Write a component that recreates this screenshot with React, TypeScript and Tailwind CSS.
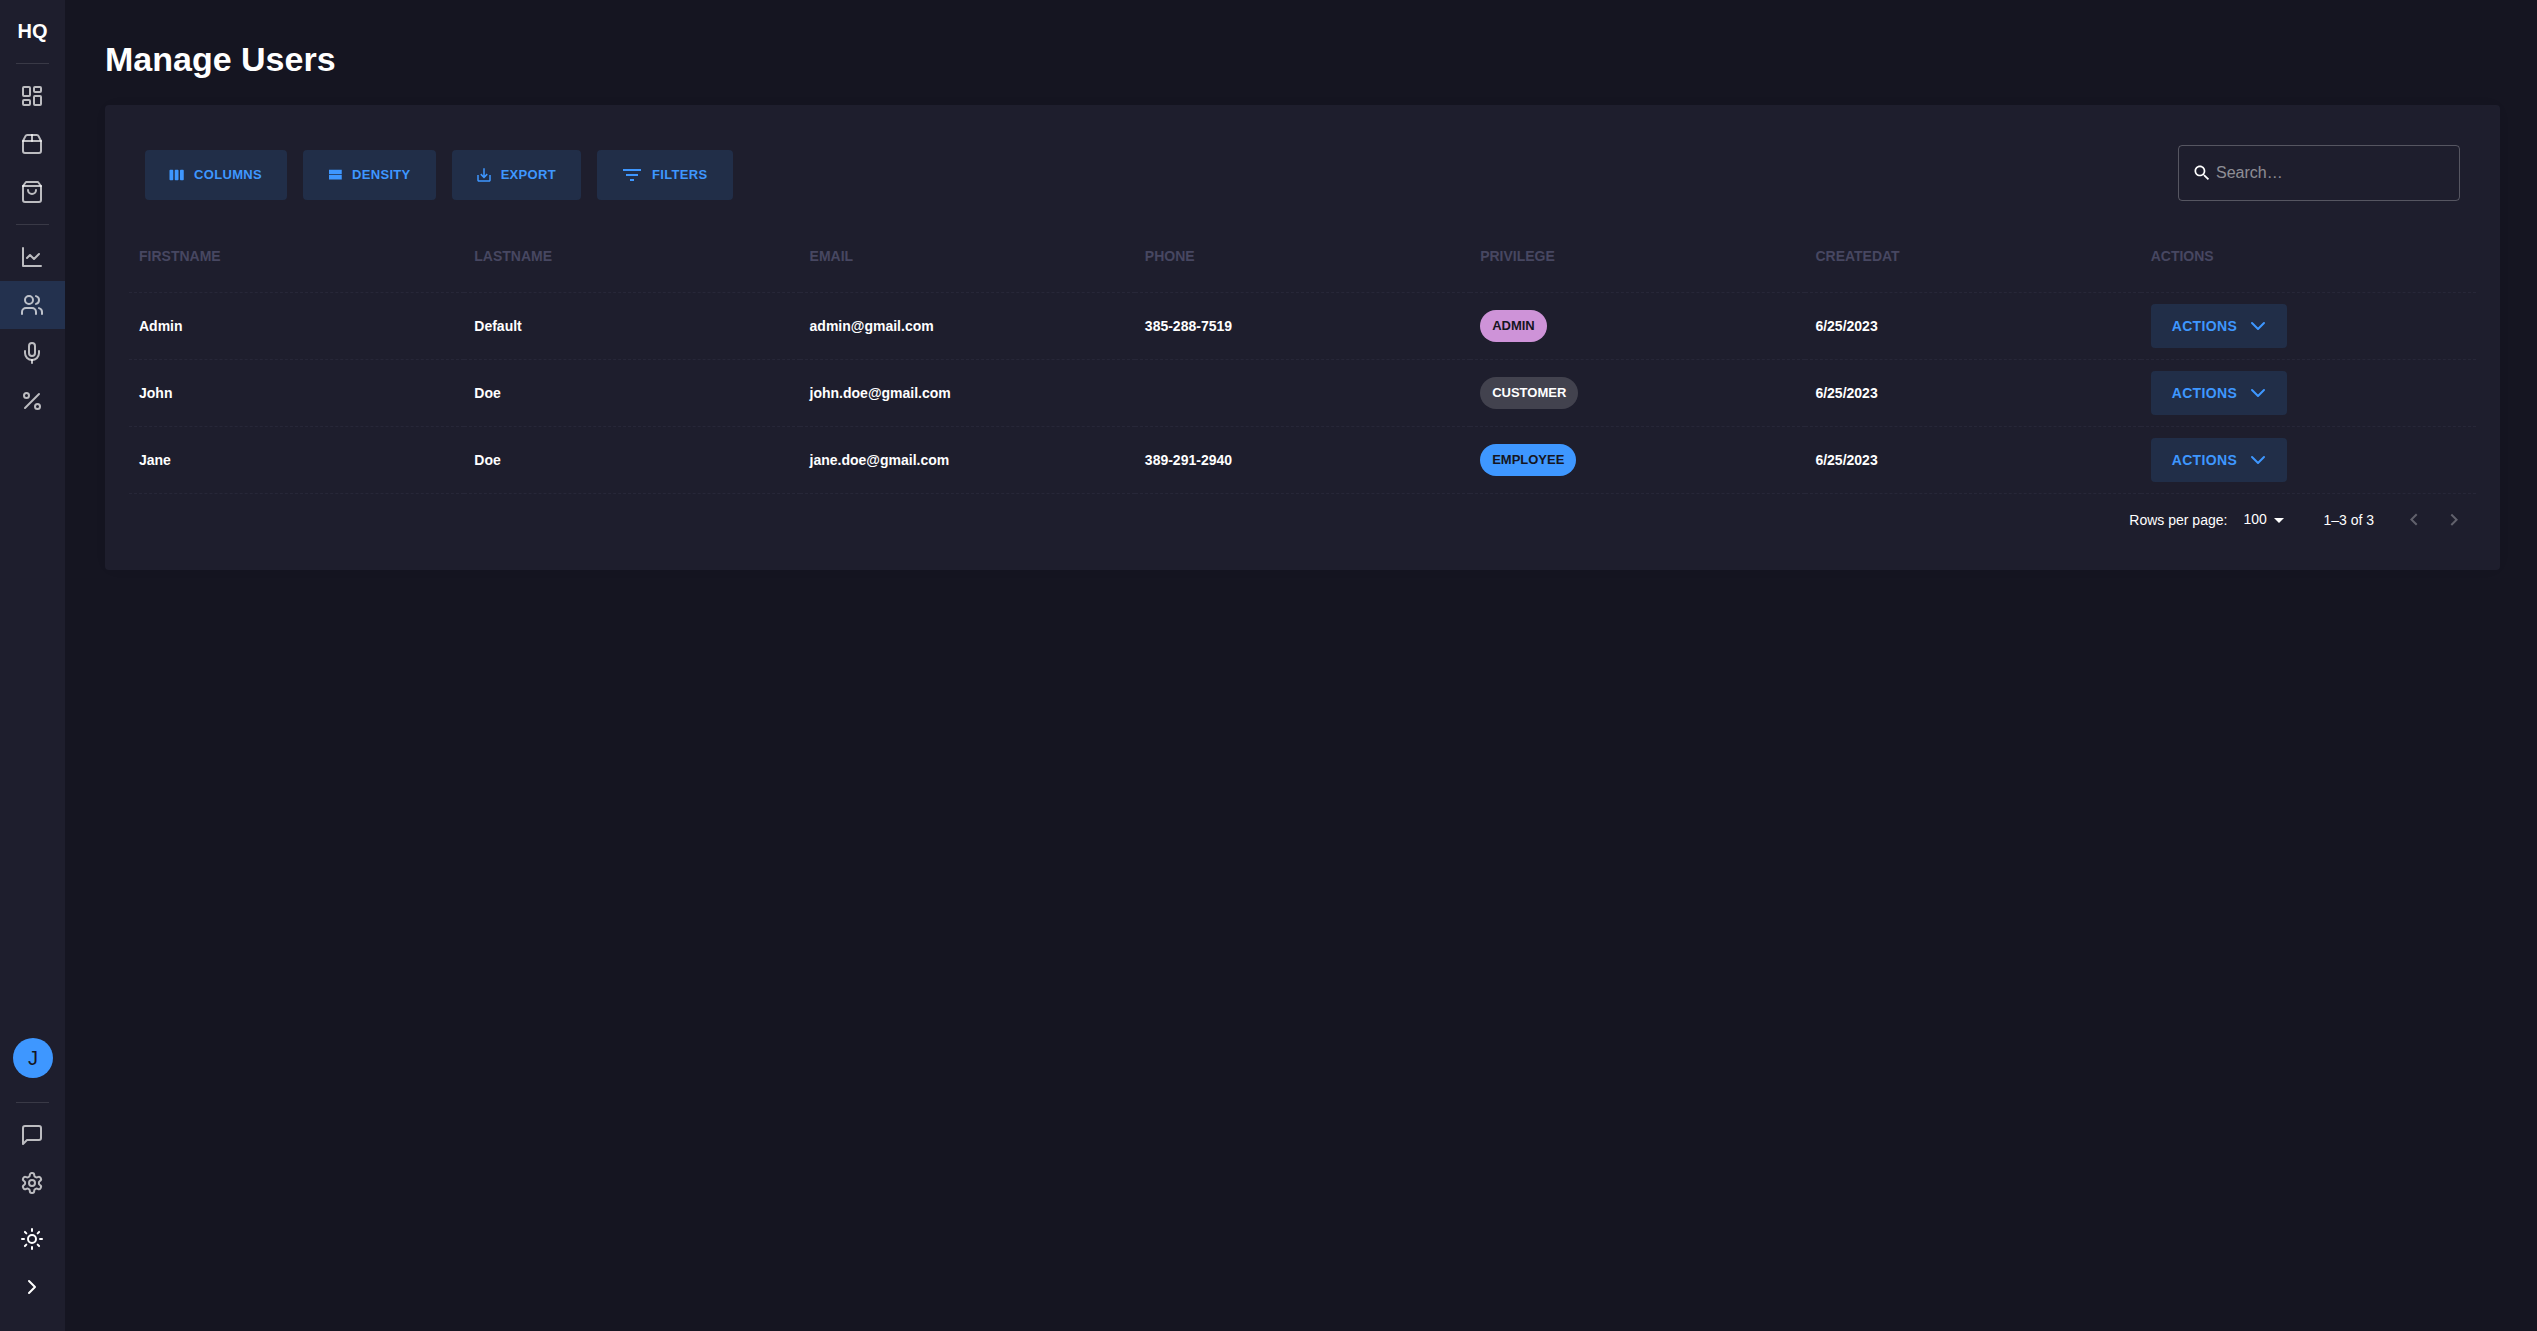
import type { ReactNode } from 'react';

type IconProps = { children: ReactNode };

function LineIcon({ children }: IconProps) {
  return (
    <svg
      className="size-6 shrink-0"
      viewBox="0 0 24 24"
      fill="none"
      stroke="currentColor"
      strokeWidth="2"
      strokeLinecap="round"
      strokeLinejoin="round"
      aria-hidden="true"
    >
      {children}
    </svg>
  );
}

function SolidIcon({ d, className }: { d: string; className: string }) {
  return (
    <svg className={className} viewBox="0 0 24 24" fill="currentColor" aria-hidden="true">
      <path d={d} />
    </svg>
  );
}

function NavItem({
  label,
  active = false,
  children,
}: {
  label: string;
  active?: boolean;
  children: ReactNode;
}) {
  return (
    <a
      href="#"
      aria-label={label}
      aria-current={active ? 'page' : undefined}
      className={
        active
          ? 'flex h-12 items-center bg-[#23314e] pl-5 text-white/70'
          : 'flex h-12 items-center pl-5 text-white/70'
      }
    >
      <LineIcon>{children}</LineIcon>
    </a>
  );
}

function Divider() {
  return <hr className="mx-4 my-2 border-t border-white/12" />;
}

function Sidebar() {
  return (
    <aside className="flex w-[65px] shrink-0 flex-col bg-[#1e1e2d]">
      <div className="flex h-[55px] items-end justify-center pb-2 text-xl leading-8 font-bold text-white">
        HQ
      </div>
      <Divider />
      <nav aria-label="Main">
        <NavItem label="Dashboard">
          <rect width="7" height="9" x="3" y="3" rx="1" />
          <rect width="7" height="5" x="14" y="3" rx="1" />
          <rect width="7" height="9" x="14" y="12" rx="1" />
          <rect width="7" height="5" x="3" y="16" rx="1" />
        </NavItem>
        <NavItem label="Products">
          <path d="M3 9h18v10a2 2 0 0 1-2 2H5a2 2 0 0 1-2-2V9Z" />
          <path d="m3 9 2.45-4.9A2 2 0 0 1 7.24 3h9.52a2 2 0 0 1 1.8 1.1L21 9" />
          <path d="M12 3v6" />
        </NavItem>
        <NavItem label="Orders">
          <path d="M6 2 3 6v14a2 2 0 0 0 2 2h14a2 2 0 0 0 2-2V6l-3-4Z" />
          <path d="M3 6h18" />
          <path d="M16 10a4 4 0 0 1-8 0" />
        </NavItem>
        <Divider />
        <NavItem label="Analytics">
          <path d="M3 3v18h18" />
          <path d="m19 9-5 5-4-4-3 3" />
        </NavItem>
        <NavItem label="Users" active>
          <path d="M16 21v-2a4 4 0 0 0-4-4H6a4 4 0 0 0-4 4v2" />
          <circle cx="9" cy="7" r="4" />
          <path d="M22 21v-2a4 4 0 0 0-3-3.87" />
          <path d="M16 3.13a4 4 0 0 1 0 7.75" />
        </NavItem>
        <NavItem label="Announcements">
          <path d="M12 2a3 3 0 0 0-3 3v7a3 3 0 0 0 6 0V5a3 3 0 0 0-3-3Z" />
          <path d="M19 10v2a7 7 0 0 1-14 0v-2" />
          <path d="M12 19v3" />
        </NavItem>
        <NavItem label="Discounts">
          <path d="M19 5 5 19" />
          <circle cx="6.5" cy="6.5" r="2.5" />
          <circle cx="17.5" cy="17.5" r="2.5" />
        </NavItem>
      </nav>

      <div className="mt-auto pb-5">
        <button
          type="button"
          aria-label="Account"
          className="mb-6 ml-[13px] flex size-10 items-center justify-center rounded-full bg-[#3e97ff] text-xl text-[#151521]"
        >
          J
        </button>
        <Divider />
        <NavItem label="Messages">
          <path d="M21 15a2 2 0 0 1-2 2H7l-4 4V5a2 2 0 0 1 2-2h14a2 2 0 0 1 2 2z" />
        </NavItem>
        <NavItem label="Settings">
          <path d="M12.22 2h-.44a2 2 0 0 0-2 2v.18a2 2 0 0 1-1 1.73l-.43.25a2 2 0 0 1-2 0l-.15-.08a2 2 0 0 0-2.73.73l-.22.38a2 2 0 0 0 .73 2.73l.15.1a2 2 0 0 1 1 1.72v.51a2 2 0 0 1-1 1.74l-.15.09a2 2 0 0 0-.73 2.73l.22.38a2 2 0 0 0 2.73.73l.15-.08a2 2 0 0 1 2 0l.43.25a2 2 0 0 1 1 1.73V20a2 2 0 0 0 2 2h.44a2 2 0 0 0 2-2v-.18a2 2 0 0 1 1-1.73l.43-.25a2 2 0 0 1 2 0l.15.08a2 2 0 0 0 2.73-.73l.22-.39a2 2 0 0 0-.73-2.73l-.15-.08a2 2 0 0 1-1-1.74v-.5a2 2 0 0 1 1-1.74l.15-.09a2 2 0 0 0 .73-2.73l-.22-.38a2 2 0 0 0-2.73-.73l-.15.08a2 2 0 0 1-2 0l-.43-.25a2 2 0 0 1-1-1.73V4a2 2 0 0 0-2-2z" />
          <circle cx="12" cy="12" r="3" />
        </NavItem>
        <button
          type="button"
          aria-label="Toggle theme"
          className="mt-2 flex h-12 w-full items-center pl-5 text-white"
        >
          <LineIcon>
            <circle cx="12" cy="12" r="4" />
            <path d="M12 2v2" />
            <path d="M12 20v2" />
            <path d="m4.93 4.93 1.41 1.41" />
            <path d="m17.66 17.66 1.41 1.41" />
            <path d="M2 12h2" />
            <path d="M20 12h2" />
            <path d="m6.34 17.66-1.41 1.41" />
            <path d="m19.07 4.93-1.41 1.41" />
          </LineIcon>
        </button>
        <button
          type="button"
          aria-label="Expand sidebar"
          className="flex h-12 w-full items-center pl-5 text-white"
        >
          <LineIcon>
            <path d="m9 18 6-6-6-6" />
          </LineIcon>
        </button>
      </div>
    </aside>
  );
}

const toolbarActions = [
  {
    label: 'Columns',
    iconClass: 'size-[18px]',
    d: 'M6 5H3c-.55 0-1 .45-1 1v12c0 .55.45 1 1 1h3c.55 0 1-.45 1-1V6c0-.55-.45-1-1-1zm14 0h-3c-.55 0-1 .45-1 1v12c0 .55.45 1 1 1h3c.55 0 1-.45 1-1V6c0-.55-.45-1-1-1zm-7 0h-3c-.55 0-1 .45-1 1v12c0 .55.45 1 1 1h3c.55 0 1-.45 1-1V6c0-.55-.45-1-1-1z',
  },
  {
    label: 'Density',
    iconClass: 'size-[18px]',
    d: 'M4 18h17v-6H4v6zM4 5v6h17V5H4z',
  },
  {
    label: 'Export',
    iconClass: 'size-[18px]',
    d: 'M19 12v7H5v-7H3v7c0 1.1.9 2 2 2h14c1.1 0 2-.9 2-2v-7h-2zm-6 .67l2.59-2.58L17 11.5l-5 5-5-5 1.41-1.41L11 12.67V3h2z',
  },
  {
    label: 'Filters',
    iconClass: 'size-6',
    d: 'M10 18h4v-2h-4v2zM3 6v2h18V6H3zm3 7h12v-2H6v2z',
  },
];

function Toolbar() {
  return (
    <div className="flex items-center justify-between p-4">
      <div className="flex gap-4 pt-1">
        {toolbarActions.map((action) => (
          <button
            key={action.label}
            type="button"
            className="flex h-[50px] items-center gap-2 rounded bg-[#212e48] pr-[25px] pl-[23px] text-[13px] font-bold tracking-wide text-[#3e97ff] uppercase"
          >
            <SolidIcon d={action.d} className={action.iconClass} />
            {action.label}
          </button>
        ))}
      </div>
      <label className="flex h-14 w-[282px] items-center gap-1 rounded border border-white/25 px-[13px] text-white">
        <SolidIcon
          className="size-5 shrink-0"
          d="M15.5 14h-.79l-.28-.27C15.41 12.59 16 11.11 16 9.5 16 5.91 13.09 3 9.5 3S3 5.91 3 9.5 5.91 16 9.5 16c1.61 0 3.09-.59 4.23-1.57l.27.28v.79l5 4.99L20.49 19l-4.99-5zm-6 0C7.01 14 5 11.99 5 9.5S7.01 5 9.5 5 14 7.01 14 9.5 11.99 14 9.5 14z"
        />
        <input
          type="search"
          aria-label="Search"
          placeholder="Search…"
          className="min-w-0 flex-1 bg-transparent text-base text-white outline-none placeholder:text-white/50"
        />
      </label>
    </div>
  );
}

const columns = ['firstName', 'lastName', 'email', 'phone', 'privilege', 'createdAt', 'actions'];

const users = [
  {
    firstName: 'Admin',
    lastName: 'Default',
    email: 'admin@gmail.com',
    phone: '385-288-7519',
    privilege: 'Admin',
    chip: 'bg-[#ce93d8] text-[#151521]',
    createdAt: '6/25/2023',
  },
  {
    firstName: 'John',
    lastName: 'Doe',
    email: 'john.doe@gmail.com',
    phone: '',
    privilege: 'Customer',
    chip: 'bg-[#42424e] text-white',
    createdAt: '6/25/2023',
  },
  {
    firstName: 'Jane',
    lastName: 'Doe',
    email: 'jane.doe@gmail.com',
    phone: '389-291-2940',
    privilege: 'Employee',
    chip: 'bg-[#3e97ff] text-[#151521]',
    createdAt: '6/25/2023',
  },
];

const cell = 'border-b border-dashed border-[#272738] px-2.5';

function UsersTable() {
  return (
    <table className="w-full table-fixed border-separate border-spacing-0 text-left text-sm font-bold text-white">
      <thead>
        <tr className="h-[76px]">
          {columns.map((column) => (
            <th key={column} scope="col" className={`${cell} pt-0.5 text-[#474761] uppercase`}>
              {column}
            </th>
          ))}
        </tr>
      </thead>
      <tbody>
        {users.map((user) => (
          <tr key={user.email} className="h-[67px]">
            <td className={cell}>{user.firstName}</td>
            <td className={cell}>{user.lastName}</td>
            <td className={cell}>{user.email}</td>
            <td className={cell}>{user.phone}</td>
            <td className={cell}>
              <span
                className={`inline-flex h-8 items-center rounded-full px-3 align-middle text-[13px] uppercase ${user.chip}`}
              >
                {user.privilege}
              </span>
            </td>
            <td className={cell}>{user.createdAt}</td>
            <td className={cell}>
              <button
                type="button"
                className="flex h-11 items-center gap-[9px] rounded bg-[#212e48] pr-[17px] pl-[21px] tracking-wide text-[#3e97ff] uppercase"
              >
                Actions
                <LineIcon>
                  <path d="m6 9 6 6 6-6" />
                </LineIcon>
              </button>
            </td>
          </tr>
        ))}
      </tbody>
    </table>
  );
}

function Pagination() {
  return (
    <div className="flex h-[52px] items-center justify-end pr-0.5 text-sm text-white">
      <label htmlFor="page-size">Rows per page:</label>
      <div className="relative mr-8 ml-4 flex items-center">
        <select
          id="page-size"
          defaultValue="100"
          className="h-6 appearance-none bg-transparent pr-6 pb-0.5 text-sm text-white outline-none"
        >
          <option value="100">100</option>
        </select>
        <SolidIcon className="pointer-events-none absolute right-0 size-6" d="M7 10l5 5 5-5z" />
      </div>
      <span>1–3 of 3</span>
      <div className="ml-5 flex">
        <button type="button" disabled aria-label="Previous page" className="p-2 text-white/30">
          <SolidIcon className="size-6" d="M15.41 16.09l-4.58-4.59 4.58-4.59L14 5.5l-6 6 6 6z" />
        </button>
        <button type="button" disabled aria-label="Next page" className="p-2 text-white/30">
          <SolidIcon className="size-6" d="M8.59 16.34l4.58-4.59-4.58-4.59L10 5.75l6 6-6 6z" />
        </button>
      </div>
    </div>
  );
}

export default function App() {
  return (
    <div className="flex min-h-screen bg-[#151521] font-['Liberation_Sans',Arial,sans-serif]">
      <Sidebar />
      <main className="min-w-0 flex-1 pt-10 pr-[37px] pl-10">
        <h1 className="text-[34px] leading-[38px] font-bold text-white">Manage Users</h1>
        <section className="mt-[27px] rounded bg-[#1e1e2d] p-6 shadow-[0_0_20px_0_rgba(76,87,125,0.02)]">
          <Toolbar />
          <UsersTable />
          <Pagination />
        </section>
      </main>
    </div>
  );
}
